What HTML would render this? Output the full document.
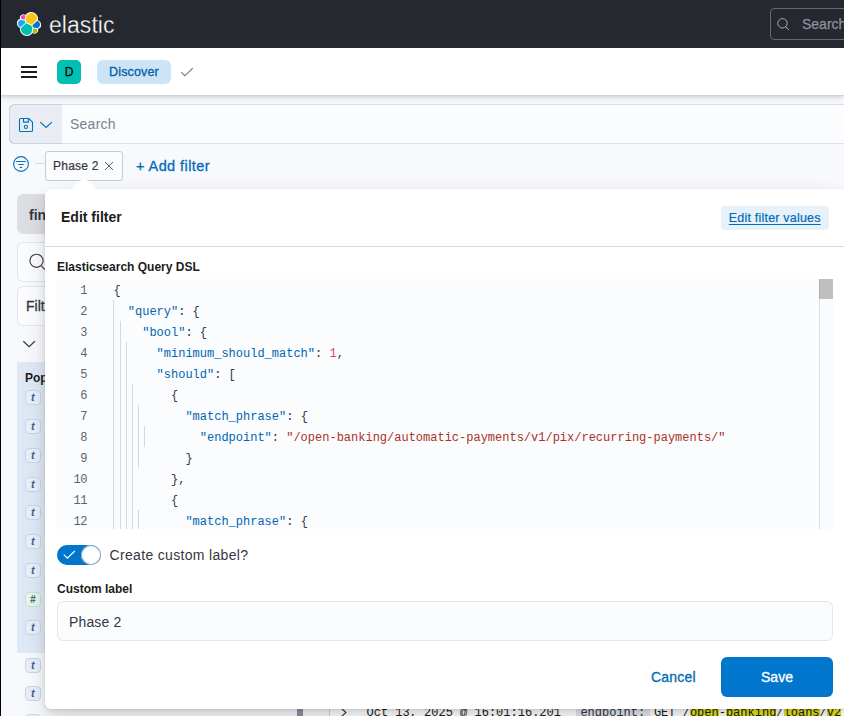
<!DOCTYPE html>
<html>
<head>
<meta charset="utf-8">
<title>Discover - Elastic</title>
<style>
*{box-sizing:border-box;margin:0;padding:0}
html,body{width:844px;height:716px;overflow:hidden}
body{font-family:"Liberation Sans",sans-serif;background:#f8f9fc;color:#343741;position:relative;font-size:14px}
.abs{position:absolute}
#edge{left:0;top:0;width:1px;height:716px;background:#000;z-index:50}
#hdr1{left:0;top:0;width:844px;height:48px;background:#25282f;z-index:4}
#hdr2{left:0;top:48px;width:844px;height:48px;background:#fff;border-bottom:1px solid #cdd3e0;box-shadow:0 1px 3px rgba(0,0,0,.1),0 4px 7px rgba(0,0,0,.06);z-index:3}
#logoText{left:49px;top:10px;color:#fff;font-size:23px;line-height:30px;letter-spacing:.05px;-webkit-text-stroke:.35px #25282f}
#gsearch{left:770px;top:8px;width:90px;height:32px;border:1px solid #666a73;border-radius:4px}
#gsearch span{position:absolute;left:31px;top:6px;color:#8f929b;font-size:14px;line-height:18px;-webkit-text-stroke:.25px #8f929b}
.ham{left:21px;width:16px;height:2px;background:#1a1c21;z-index:4}
#avatar{left:57px;top:60px;width:24px;height:24px;border-radius:5px;background:#00bfb3;color:#000;font-size:12px;line-height:24px;text-align:center;z-index:4;-webkit-text-stroke:.25px #000}
#crumb{left:97px;top:60px;width:74px;height:24px;border-radius:6px;background:#cce4f5;color:#0061a6;font-size:12.5px;letter-spacing:.15px;line-height:24px;text-align:center;z-index:4;-webkit-text-stroke:.3px #0061a6}
/* query bar */
#qbar{left:9px;top:104px;width:860px;height:40px;border-radius:6px;background:#fbfcfd;box-shadow:inset 0 0 0 1px rgba(17,43,134,.13)}
#qpre{left:9px;top:104px;width:53px;height:40px;border-radius:6px 0 0 6px;background:#e9edf3;box-shadow:inset 1px 0 0 0 rgba(17,43,134,.13),inset 0 1px 0 0 rgba(17,43,134,.13),inset 0 -1px 0 0 rgba(17,43,134,.13)}
#qph{left:70px;top:115px;font-size:14px;line-height:18px;color:#7b818d;letter-spacing:.25px}
#fbadge{left:45px;top:151px;width:78px;height:30px;border:1px solid #c3cad8;border-radius:3px;background:#fbfcfd}
#fbadge span{position:absolute;left:7px;top:6px;font-size:12px;line-height:16px;color:#343741;letter-spacing:.25px;-webkit-text-stroke:.2px #343741}
#addf{left:136px;top:157px;font-size:14.5px;line-height:18px;color:#006bb8;letter-spacing:.42px;-webkit-text-stroke:.3px #006bb8}
/* sidebar */
#idx{left:17px;top:194px;width:300px;height:40px;border-radius:6px;background:#dcdee3}
#idx span{position:absolute;left:12px;top:10.5px;font-size:14px;line-height:20px;font-weight:bold;color:#343741}
.fld{left:17px;width:300px;border-radius:6px;background:#fbfcfd;box-shadow:inset 0 0 0 1px rgba(17,43,134,.1)}
#pop{left:17px;top:362px;width:290px;height:291px;background:#dfe9f5}
#pop b{position:absolute;left:8px;top:8px;font-size:12px;line-height:16px;color:#1a1c21}
.tok{left:25px;width:15.5px;height:15px;border-radius:4px;background:#e8eff8;border:1px solid #c6d6e9;color:#41648f;font-style:italic;font-weight:bold;font-size:11px;line-height:13px;text-align:center}
.tok.n{background:#e8f4ee;border-color:#c3e0d2;color:#357160;font-size:10px;line-height:13px}

#tbl{left:329px;top:640px;width:520px;height:80px;background:#fff;border-left:1px solid #cdd2dd}
#hnd{left:297px;top:640px;width:6px;height:80px;background:#8d919c}
#row{left:0;top:705px;height:16px;line-height:16px;font-family:"Liberation Mono",monospace;font-size:12px;color:#1a1c21;white-space:pre}
#row i{font-style:normal;position:absolute;top:0}
#row mark{background:#e6e616;color:#1a1c21}
/* popover */
#pov{left:45px;top:189px;width:801px;height:520px;background:#fff;border-radius:6px;box-shadow:0 1px 3px rgba(0,0,0,.08),0 4px 10px rgba(0,0,0,.08),0 10px 24px rgba(0,0,0,.12);z-index:10}
#arrow{left:72px;top:177px;width:24px;height:12px;z-index:11}
#pov .title{left:16px;top:19px;font-size:14px;line-height:18px;font-weight:bold;color:#1a1c21}
#efv{left:676px;top:17px;width:107.5px;height:24px;border-radius:4px;background:#e6f1fa;color:#006bb8;font-size:12.5px;letter-spacing:.2px;line-height:24px;text-underline-offset:2px;text-align:center;text-decoration:underline;-webkit-text-stroke:.2px #006bb8}
#sep{left:0;top:57px;width:801px;height:1px;background:#d3dae6}
.lbl{font-size:12px;line-height:16px;font-weight:bold;color:#1a1c21}
#ed{left:12px;top:90px;width:776px;height:250px;background:#fbfcfd;overflow:hidden;font-family:"Liberation Mono",monospace;font-size:12px}
#ed .ln{position:absolute;left:0;width:30px;text-align:right;color:#5d6370;height:21px;line-height:21px;padding-top:2px;letter-spacing:-.4px}
#ed .cl{position:absolute;left:57px;height:21px;line-height:21px;white-space:pre;color:#343741;padding-top:2px;margin-left:-.6px}
#ed .k{color:#0065b3}#ed .s{color:#a8322a}#ed .n{color:#e0416f}
#ed .g{position:absolute;width:1px;background:#d5d8df}
#sbar{left:762px;top:0;width:14px;height:250px;border-left:1px solid #dcdee3;background:#fafbfd}
#sthumb{left:762px;top:0;width:14px;height:20px;background:#bfbfbf;border-left:1px solid #aeaeae}
#sw{left:12px;top:356px;width:44px;height:20px;border-radius:10px;background:#0077cc}
#sw i{position:absolute;left:24px;top:0;width:20px;height:20px;border-radius:10px;background:#fff;box-shadow:0 0 0 1px #7ea6cf inset}
#swl{left:64.5px;top:357px;font-size:14px;line-height:18px;color:#343741;letter-spacing:.33px}
#inp{left:12px;top:412px;width:776px;height:40px;border-radius:6px;background:#fbfcfd;box-shadow:inset 0 0 0 1px rgba(17,43,134,.1)}
#inp span{position:absolute;left:12px;top:12px;letter-spacing:.15px;font-size:14px;line-height:18px;color:#343741}
#cancel{left:606px;top:479px;font-size:14px;line-height:18px;color:#006bb8;letter-spacing:.2px;-webkit-text-stroke:.3px #006bb8}
#save{left:676px;top:468px;width:112px;height:40px;border-radius:6px;background:#0077cc;color:#fff;font-size:14px;line-height:40px;text-align:center;-webkit-text-stroke:.3px #fff}
</style>
</head>
<body>
<div id="hdr1" class="abs">
  <svg class="abs" style="left:17px;top:12px" width="24" height="24" viewBox="0 0 32 32">
    <path fill="#FFF" d="M32 16.77a6.334 6.334 0 00-1.14-3.63 6.269 6.269 0 00-3.02-2.3 9.044 9.044 0 00-.96-6.17 8.953 8.953 0 00-4.55-4 8.87 8.87 0 00-6.04-.23 8.92 8.92 0 00-4.85 3.63 4.754 4.754 0 00-5.17-.39 4.8 4.8 0 00-2.19 2.47 4.838 4.838 0 00-.14 3.3A6.394 6.394 0 00.58 11.6 6.436 6.436 0 000 15.23c0 1.3.39 2.57 1.14 3.64a6.32 6.32 0 003.03 2.3 9.004 9.004 0 00.95 6.16 8.917 8.917 0 004.54 4 8.84 8.84 0 006.04.24 8.89 8.89 0 004.85-3.62 4.725 4.725 0 005.16.38 4.77 4.77 0 002.19-2.46c.42-1.05.47-2.22.14-3.3a6.4 6.4 0 003.38-2.17c.75-1.06 1.15-2.33 1.15-3.63"/>
    <path fill="#FEC514" d="M12.58 13.787l7.002 3.211 7.066-6.213a7.849 7.849 0 00.152-1.557c0-4.287-3.472-7.763-7.754-7.763a7.759 7.759 0 00-6.402 3.388l-1.176 6.118 1.111 2.816z"/>
    <path fill="#00BFB3" d="M5.33 21.215a7.953 7.953 0 00-.149 1.566 7.79 7.79 0 007.78 7.783 7.768 7.768 0 006.42-3.393l1.166-6.1-1.557-2.986-7.03-3.214-6.63 6.344z"/>
    <path fill="#F04E98" d="M5.288 9.067l4.8 1.137L11.14 4.73a3.785 3.785 0 00-6.033 3.021c0 .463.083.906.228 1.316"/>
    <path fill="#1BA9F5" d="M4.872 10.214c-2.143.71-3.65 2.774-3.65 5.075a5.397 5.397 0 003.463 5.045l6.733-6.112-1.236-2.652-5.31-1.356z"/>
    <path fill="#93C90E" d="M20.873 27.27a3.776 3.776 0 002.295.783 3.79 3.79 0 003.79-3.797c0-.463-.083-.906-.228-1.316l-4.796-1.126-1.06 5.456z"/>
    <path fill="#07C" d="M21.848 20.563l5.28 1.24c2.145-.713 3.652-2.778 3.652-5.08a5.382 5.382 0 00-3.471-5.033l-6.906 6.077 1.445 2.796z"/>
  </svg>
  <div id="logoText" class="abs">elastic</div>
  <div id="gsearch" class="abs">
    <svg class="abs" style="left:5px;top:7px" width="16" height="16" viewBox="0 0 16 16" fill="none" stroke="#a9acb3" stroke-width="1"><circle cx="6.5" cy="7.3" r="4.7"/><path d="M9.6 10.9l3.3 2.9" stroke-linecap="round"/></svg>
    <span>Search</span>
  </div>
</div>
<div id="hdr2" class="abs"></div>
<div class="abs ham" style="top:66px"></div>
<div class="abs ham" style="top:71px"></div>
<div class="abs ham" style="top:76px"></div>
<div id="avatar" class="abs">D</div>
<div id="crumb" class="abs">Discover</div>
<svg class="abs" style="left:180px;top:66px;z-index:4" width="14" height="12" viewBox="0 0 14 12" fill="none" stroke="#69707d" stroke-width="1.1"><path d="M1.3 6.2l3.6 3.6 7.8-7.6"/></svg>

<!-- query bar -->
<div id="qbar" class="abs"></div>
<div id="qpre" class="abs"></div>
<svg class="abs" style="left:18px;top:117px" width="16" height="16" viewBox="0 0 16 16" fill="none" stroke="#0071c2" stroke-width="1.1"><path d="M1.5 2.5a1 1 0 011-1h8.3l3.7 3.7v8.3a1 1 0 01-1 1h-11a1 1 0 01-1-1z"/><path d="M5.5 1.6v3.5h4.9V1.6"/><circle cx="7.9" cy="9.9" r="1.6"/></svg>
<svg class="abs" style="left:38px;top:119px" width="16" height="12" viewBox="0 0 16 12" fill="none" stroke="#0071c2" stroke-width="1.15"><path d="M2.6 3.4l5.5 5.1 5.5-5.1" stroke-linecap="round"/></svg>
<div id="qph" class="abs">Search</div>

<!-- filter row -->
<svg class="abs" style="left:13px;top:156px" width="16" height="16" viewBox="0 0 16 16" fill="none" stroke="#0071c2" stroke-width="1.1"><circle cx="8" cy="8" r="7.4"/><path d="M3.6 5.5h8.8M5.6 8.45h4.8M7.3 11.4h1.4" stroke-linecap="round"/></svg>
<div class="abs" style="left:35px;top:163px;width:10px;height:1px;background:#d3dae6"></div>
<div id="fbadge" class="abs"><span>Phase 2</span>
  <svg class="abs" style="left:58px;top:9px" width="10" height="10" viewBox="0 0 10 10" fill="none" stroke="#4a4e59" stroke-width=".9"><path d="M1 1l8 8M9 1l-8 8"/></svg>
</div>
<div id="addf" class="abs">+ Add filter</div>

<!-- sidebar (mostly hidden) -->
<div id="idx" class="abs"><span>fin</span></div>
<div class="abs fld" style="top:242px;height:40px"></div>
<svg class="abs" style="left:28px;top:252px" width="18" height="18" viewBox="0 0 18 18" fill="none" stroke="#343741" stroke-width="1.1"><circle cx="8.5" cy="8.8" r="6.6"/><path d="M13.2 13.6l3.6 4"/></svg>
<div class="abs fld" style="top:286px;height:40px"></div>
<div class="abs" style="left:26px;top:297px;font-size:14px;line-height:18px;color:#343741;-webkit-text-stroke:.3px #343741">Filter by type</div>
<svg class="abs" style="left:22px;top:338px" width="16" height="12" viewBox="0 0 16 12" fill="none" stroke="#343741" stroke-width="1.2"><path d="M1.3 3.2l5.8 5.4 5.8-5.4"/></svg>
<div id="pop" class="abs"><b>Popular</b></div>
<div class="abs tok" style="top:390.4px">t</div>
<div class="abs tok" style="top:419.1px">t</div>
<div class="abs tok" style="top:447.9px">t</div>
<div class="abs tok" style="top:476.6px">t</div>
<div class="abs tok" style="top:505.4px">t</div>
<div class="abs tok" style="top:534.1px">t</div>
<div class="abs tok" style="top:562.9px">t</div>
<div class="abs tok n" style="top:591.6px">#</div>
<div class="abs tok" style="top:620.4px">t</div>
<div class="abs tok" style="top:657.5px">t</div>
<div class="abs tok" style="top:686.3px">t</div>
<div class="abs tok n" style="top:714.3px">#</div>

<!-- bottom strip -->
<div id="tbl" class="abs"></div>
<div id="hnd" class="abs"></div>
<div id="row" class="abs">
  <svg class="abs" style="left:340px;top:2px" width="8" height="12" viewBox="0 0 8 12" fill="none" stroke="#343741" stroke-width="1.1"><path d="M1.5 1.5l4.5 4-4.5 4"/></svg>
  <i style="left:366.5px">Oct 13, 2025 @ 16:01:16.201</i>
  <i style="left:575.5px;width:74px;height:16px;background:#e3e7ee"></i>
  <i style="left:580.4px;color:#343741">endpoint:</i>
  <i style="left:653.9px">GET /<mark>open</mark>-<mark>banking</mark>/<mark>loans</mark>/<mark>v2</mark></i>
</div>

<!-- popover -->
<svg id="arrow" class="abs" viewBox="0 0 24 12"><path d="M0 12L12 0l12 12z" fill="#fff"/></svg>
<div id="pov" class="abs">
  <div class="abs title">Edit filter</div>
  <div id="efv" class="abs">Edit filter values</div>
  <div id="sep" class="abs"></div>
  <div class="abs lbl" style="left:12px;top:70px">Elasticsearch Query DSL</div>
  <div id="ed" class="abs">
    <div class="ln" style="top:0px">1</div>
    <div class="cl" style="top:0px;left:57.0px">{</div>
    <div class="ln" style="top:21px">2</div>
    <div class="cl" style="top:21px;left:71.4px"><span class="k">"query"</span>: {</div>
    <div class="g" style="top:21px;height:21px;left:56.4px"></div>
    <div class="ln" style="top:42px">3</div>
    <div class="cl" style="top:42px;left:85.8px"><span class="k">"bool"</span>: {</div>
    <div class="g" style="top:42px;height:21px;left:56.4px"></div>
    <div class="g" style="top:42px;height:21px;left:62.5px"></div>
    <div class="ln" style="top:63px">4</div>
    <div class="cl" style="top:63px;left:100.2px"><span class="k">"minimum_should_match"</span>: <span class="n">1</span>,</div>
    <div class="g" style="top:63px;height:21px;left:56.4px"></div>
    <div class="g" style="top:63px;height:21px;left:62.5px"></div>
    <div class="g" style="top:63px;height:21px;left:68.6px"></div>
    <div class="ln" style="top:84px">5</div>
    <div class="cl" style="top:84px;left:100.2px"><span class="k">"should"</span>: [</div>
    <div class="g" style="top:84px;height:21px;left:56.4px"></div>
    <div class="g" style="top:84px;height:21px;left:62.5px"></div>
    <div class="g" style="top:84px;height:21px;left:68.6px"></div>
    <div class="ln" style="top:105px">6</div>
    <div class="cl" style="top:105px;left:114.6px">{</div>
    <div class="g" style="top:105px;height:21px;left:56.4px"></div>
    <div class="g" style="top:105px;height:21px;left:62.5px"></div>
    <div class="g" style="top:105px;height:21px;left:68.6px"></div>
    <div class="g" style="top:105px;height:21px;left:74.7px"></div>
    <div class="ln" style="top:126px">7</div>
    <div class="cl" style="top:126px;left:129.0px"><span class="k">"match_phrase"</span>: {</div>
    <div class="g" style="top:126px;height:21px;left:56.4px"></div>
    <div class="g" style="top:126px;height:21px;left:62.5px"></div>
    <div class="g" style="top:126px;height:21px;left:68.6px"></div>
    <div class="g" style="top:126px;height:21px;left:74.7px"></div>
    <div class="g" style="top:126px;height:21px;left:80.8px"></div>
    <div class="ln" style="top:147px">8</div>
    <div class="cl" style="top:147px;left:143.4px"><span class="k">"endpoint"</span>: <span class="s">"/open-banking/automatic-payments/v1/pix/recurring-payments/"</span></div>
    <div class="g" style="top:147px;height:21px;left:56.4px"></div>
    <div class="g" style="top:147px;height:21px;left:62.5px"></div>
    <div class="g" style="top:147px;height:21px;left:68.6px"></div>
    <div class="g" style="top:147px;height:21px;left:74.7px"></div>
    <div class="g" style="top:147px;height:21px;left:80.8px"></div>
    <div class="g" style="top:147px;height:21px;left:86.9px"></div>
    <div class="ln" style="top:168px">9</div>
    <div class="cl" style="top:168px;left:129.0px">}</div>
    <div class="g" style="top:168px;height:21px;left:56.4px"></div>
    <div class="g" style="top:168px;height:21px;left:62.5px"></div>
    <div class="g" style="top:168px;height:21px;left:68.6px"></div>
    <div class="g" style="top:168px;height:21px;left:74.7px"></div>
    <div class="g" style="top:168px;height:21px;left:80.8px"></div>
    <div class="ln" style="top:189px">10</div>
    <div class="cl" style="top:189px;left:114.6px">},</div>
    <div class="g" style="top:189px;height:21px;left:56.4px"></div>
    <div class="g" style="top:189px;height:21px;left:62.5px"></div>
    <div class="g" style="top:189px;height:21px;left:68.6px"></div>
    <div class="g" style="top:189px;height:21px;left:74.7px"></div>
    <div class="ln" style="top:210px">11</div>
    <div class="cl" style="top:210px;left:114.6px">{</div>
    <div class="g" style="top:210px;height:21px;left:56.4px"></div>
    <div class="g" style="top:210px;height:21px;left:62.5px"></div>
    <div class="g" style="top:210px;height:21px;left:68.6px"></div>
    <div class="g" style="top:210px;height:21px;left:74.7px"></div>
    <div class="ln" style="top:231px">12</div>
    <div class="cl" style="top:231px;left:129.0px"><span class="k">"match_phrase"</span>: {</div>
    <div class="g" style="top:231px;height:21px;left:56.4px"></div>
    <div class="g" style="top:231px;height:21px;left:62.5px"></div>
    <div class="g" style="top:231px;height:21px;left:68.6px"></div>
    <div class="g" style="top:231px;height:21px;left:74.7px"></div>
    <div class="g" style="top:231px;height:21px;left:80.8px"></div>
    <div id="sbar" class="abs"></div><div id="sthumb" class="abs"></div>
  </div>
  <div id="sw" class="abs"><svg class="abs" style="left:6px;top:5px" width="13" height="10" viewBox="0 0 13 10" fill="none" stroke="#fff" stroke-width="1.2"><path d="M.8 4.6l3.6 3.6L11.8 1"/></svg><i></i></div>
  <div id="swl" class="abs">Create custom label?</div>
  <div class="abs lbl" style="left:12px;top:392px">Custom label</div>
  <div id="inp" class="abs"><span>Phase 2</span></div>
  <div id="cancel" class="abs">Cancel</div>
  <div id="save" class="abs">Save</div>
</div>
<div id="edge" class="abs"></div>
</body>
</html>
